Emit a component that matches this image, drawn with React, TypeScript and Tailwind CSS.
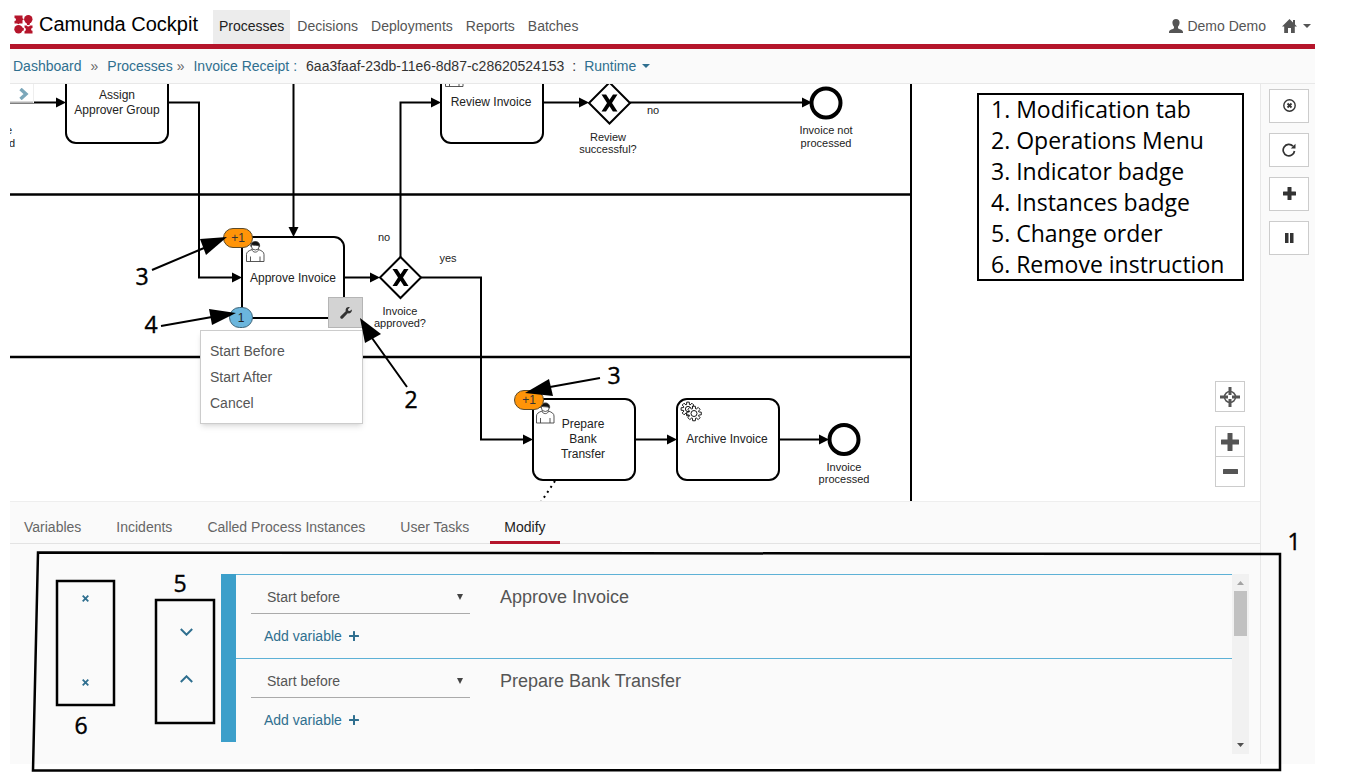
import React from "react";

const navItems = ["Decisions", "Deployments", "Reports", "Batches"];
const tabs = ["Variables", "Incidents", "Called Process Instances", "User Tasks", "Modify"];
const legend = [
  "1. Modification tab",
  "2. Operations Menu",
  "3. Indicator badge",
  "4. Instances badge",
  "5. Change order",
  "6. Remove instruction",
];
const instructions = [
  { name: "Approve Invoice", move: "down" },
  { name: "Prepare Bank Transfer", move: "up" },
];

function Logo() {
  return (
    <svg width="19" height="19" viewBox="0 0 19 19" fill="#b5152b" aria-hidden="true">
      <path d="M.5.5H8.500V3.300L10 4.300 8.500 5.300V8.500H5.500L4.300 9.300 3.200 8.500H.5V6A1.500 1.500 0 0 0 .5 3Z" />
      <circle cx="14.300" cy="4.300" r="4.200" />
      <path d="M12.500 7.500h3.600l-.6 2.500h-2.400Z" />
      <circle cx="4.500" cy="14.300" r="4.200" />
      <path d="M7.500 12.500v3.600l2.300-.6v-2.400Z" />
      <path d="M10.500 10.500H12.600A1.900 1.900 0 0 0 16 10.500H18.500V13A1.400 1.400 0 0 0 18.500 15.800V18.500H10.500V16.300A2 2 0 0 0 10.500 12.500Z" />
    </svg>
  );
}

function Caret() {
  return (
    <svg width="8" height="4" viewBox="0 0 8 4" fill="currentColor" aria-hidden="true">
      <path d="M0 0h8L4 4Z" />
    </svg>
  );
}

function Plus({ size, thick }: { size: number; thick: number }) {
  const a = (size - thick) / 2;
  return (
    <svg width={size} height={size} fill="currentColor" aria-hidden="true">
      <rect x={a} y="0" width={thick} height={size} rx="0.5" />
      <rect x="0" y={a} width={size} height={thick} rx="0.5" />
    </svg>
  );
}

function Arrow({ points }: { points: string }) {
  return <polygon points={points} fill="#000" />;
}

function Gateway({ x, y }: { x: number; y: number }) {
  return (
    <g transform={`translate(${x} ${y})`}>
      <path d="M0-20.500 20.500 0 0 20.500-20.500 0Z" fill="#fff" stroke="#000" strokeWidth="2" />
      <path d="M-8-8.500h4.600L0-3.200l3.500-5.300h4.500L2.500 0l5.500 8.500H3.400L0 3.200l-3.500 5.300h-4.500l5.500-8.500Z" />
    </g>
  );
}

function UserMark({ x, y }: { x: number; y: number }) {
  return (
    <g transform={`translate(${x} ${y})`} stroke="#444" strokeWidth="0.9" fill="#fff">
      <path d="M.5 20.500v-7c0-2.500 2-3.600 5.500-5h6.500c3.500 1.400 5.500 2.500 5.500 5v7Z" />
      <path d="M4.500 20.500v-5M14 20.500v-5" fill="none" />
      <path d="M6 8.500c.5 3.500 6 3.500 6.500 0" />
      <circle cx="9.300" cy="5" r="4" />
      <path d="M5 5.500C4-1 14.500-1.500 13.600 5.500 12 3.500 8 5 5 3.500Z" fill="#111" />
    </g>
  );
}

function Gear({ x, y, r }: { x: number; y: number; r: number }) {
  const teeth = Array.from({ length: 8 }, (_, i) => {
    const c = (i * Math.PI) / 4;
    return [
      [-0.32, r],
      [-0.18, r + 2.4],
      [0.18, r + 2.4],
      [0.32, r],
    ]
      .map(([d, q]) => `${x + Math.cos(c + d) * q},${y + Math.sin(c + d) * q}`)
      .join(" ");
  }).join(" ");
  return (
    <g fill="#fff" stroke="#000" strokeWidth="0.9">
      <polygon points={teeth} />
      <circle cx={x} cy={y} r={r - 2} />
    </g>
  );
}

function Label({ x, y, lines, size = 12, step = 15 }: { x: number; y: number; lines: string[]; size?: number; step?: number }) {
  return (
    <text textAnchor="middle" fontSize={size} fill="#222">
      {lines.map((line, i) => (
        <tspan key={line} x={x} y={y + i * step}>
          {line}
        </tspan>
      ))}
    </text>
  );
}

function Diagram() {
  return (
    <svg className="absolute inset-0 h-full w-full" role="img" aria-label="Invoice process diagram">
      <g transform="translate(-10 -84)">
        <g stroke="#000" fill="none">
          <path d="M10 194.500H911M10 357H911" strokeWidth="2.500" />
          <path d="M911 84V502" strokeWidth="2" />
          <g strokeWidth="2">
            <path d="M10 102.500H58M168 102.500H199V277.500H234M293.500 84V228M345 277.500H372M400.500 257V102.500H432M543 102.500H580M630 102.500H803M421 277.500H481V439.500H525M635 439.500H669M780 439.500H820" />
            <path d="M555 481 541 502" strokeDasharray="2 4" />
            <g fill="#fff">
              <rect x="66" y="63" width="102" height="80" rx="10" />
              <rect x="441" y="63" width="102" height="80" rx="10" />
              <rect x="242" y="237" width="102" height="81" rx="10" />
              <rect x="533" y="399" width="102" height="81" rx="10" />
              <rect x="677" y="399" width="102" height="81" rx="10" />
            </g>
          </g>
          <g strokeWidth="4" fill="#fff">
            <circle cx="826" cy="103" r="14.500" />
            <circle cx="844" cy="439.500" r="14.500" />
          </g>
        </g>
        <Arrow points="56,97.500 66,102.500 56,107.500" />
        <Arrow points="232,272.500 242,277.500 232,282.500" />
        <Arrow points="288.500,227 293.500,237 298.500,227" />
        <Arrow points="370,272.500 380,277.500 370,282.500" />
        <Arrow points="431,97.500 441,102.500 431,107.500" />
        <Arrow points="579,97.500 589,102.500 579,107.500" />
        <Arrow points="802,97.500 812,102.500 802,107.500" />
        <Arrow points="523,434.500 533,439.500 523,444.500" />
        <Arrow points="667,434.500 677,439.500 667,444.500" />
        <Arrow points="819,434.500 829,439.500 819,444.500" />
        <Gateway x={609.5} y={103} />
        <Gateway x={400.5} y={277.5} />
        <UserMark x={246} y={241} />
        <UserMark x={536} y={402.5} />
        <UserMark x={445} y={66} />
        <Gear x={688} y={409} r={4.6} />
        <Gear x={694} y={413.5} r={5} />
        <Label x={117} y={99} lines={["Assign", "Approver Group"]} />
        <Label x={491} y={106} lines={["Review Invoice"]} />
        <Label x={293} y={282} lines={["Approve Invoice"]} />
        <Label x={583} y={428} lines={["Prepare", "Bank", "Transfer"]} />
        <Label x={727} y={443} lines={["Archive Invoice"]} />
        <Label x={608} y={141} lines={["Review", "successful?"]} size={11} step={12} />
        <Label x={826} y={134} lines={["Invoice not", "processed"]} size={11} step={13} />
        <Label x={844} y={471} lines={["Invoice", "processed"]} size={11} step={12} />
        <Label x={400} y={315} lines={["Invoice", "approved?"]} size={11} step={12} />
        <Label x={653} y={114} lines={["no"]} size={11} />
        <Label x={384} y={241} lines={["no"]} size={11} />
        <Label x={448} y={262} lines={["yes"]} size={11} />
        <Label x={9} y={134} lines={["e"]} size={11} />
        <Label x={12} y={147} lines={["d"]} size={11} />
      </g>
    </svg>
  );
}

function Annotations() {
  return (
    <svg className="pointer-events-none absolute inset-0 h-full w-full" aria-hidden="true">
      <g fill="none" stroke="#000" strokeWidth="2.500">
        <path d="M38 552.500 1280 554V770L33 770.500Z" />
        <rect x="57" y="581" width="57" height="124" />
        <rect x="156" y="600" width="58" height="123" />
        <path d="M152 270 204 248M161 326 212 317M407 387 372 338M600 378 550 387" strokeWidth="2" />
      </g>
      <Arrow points="227,237 200,239 206,255" />
      <Arrow points="236,313 209,309 212,325" />
      <Arrow points="360,318 381,334 365,343" />
      <Arrow points="525,393 549,379 553,396" />
      <g fontSize="23" stroke="#000" strokeWidth="0.4" textAnchor="middle" className="font-['Open_Sans',sans-serif]">
        <text x="142" y="285">3</text>
        <text x="151" y="333">4</text>
        <text x="411" y="408">2</text>
        <text x="614" y="384">3</text>
        <text x="1294" y="550">1</text>
        <text x="180" y="592">5</text>
        <text x="81" y="734">6</text>
      </g>
    </svg>
  );
}

const sideButton = "flex h-[34px] w-10 items-center justify-center border border-[#ccc] bg-white pb-px text-[#333]";
const zoomButton = "flex h-[31px] w-[30px] items-center justify-center border border-[#ccc] bg-white text-[#555]";

export default function App() {
  return (
    <div className="relative min-h-screen bg-white pt-2.5 pr-[31px] pb-[15px] pl-2.5 font-['Liberation_Sans',Arial,sans-serif] text-sm text-[#555]">
      <header className="flex h-[39px] items-stretch border-b-[5px] border-[#b5152b]">
        <a href="#home" className="flex w-[203px] items-center gap-1.5 pb-1.5 pl-1 text-xl text-black">
          <Logo />
          Camunda Cockpit
        </a>
        <nav className="flex flex-1 items-stretch gap-px">
          <a href="#processes" className="flex items-center bg-[#ececec] px-1.5 pb-0.5 text-[#222]">
            Processes
          </a>
          {navItems.map((item) => (
            <a key={item} href={`#${item}`} className="flex items-center px-1.5 pb-0.5">
              {item}
            </a>
          ))}
        </nav>
        <div className="flex items-center gap-4 pr-1 pb-0.5">
          <button className="flex items-center gap-1">
            <svg width="14" height="14" viewBox="0 0 14 14" fill="currentColor" aria-hidden="true">
              <path d="M7 0C9.200 0 10.700 1.600 10.600 3.800 10.500 5.800 9.600 7 9 7.800V9.200C9.700 10.200 14 10.500 14 13V14H0V13C0 10.500 4.300 10.200 5 9.200V7.800C4.400 7 3.500 5.800 3.400 3.800 3.300 1.600 4.800 0 7 0Z" />
            </svg>
            Demo Demo
          </button>
          <button className="flex items-center gap-1.5" aria-label="Applications">
            <svg width="15" height="14" viewBox="0 0 15 14" fill="currentColor" aria-hidden="true">
              <path d="M7.500 0 11 3.500V1H13V5.600L15 7.600H12.800V14H9V9H6V14H2.200V7.600H0Z" />
            </svg>
            <Caret />
          </button>
        </div>
      </header>

      <nav aria-label="Breadcrumb" className="flex h-[35px] items-center border-b border-[#e8e8e8] bg-[#fafafa] pl-[3px] text-[#333]">
        <a href="#dashboard" className="text-[#2f6f8f]">Dashboard</a>
        <span className="px-[9px] text-[#666]">»</span>
        <a href="#processes" className="text-[#2f6f8f]">Processes</a>
        <span className="pr-[9px] pl-1 text-[#666]">»</span>
        <a href="#invoice" className="text-[#2f6f8f]">Invoice Receipt</a>
        <span className="pr-[9px] pl-1 text-[#2f6f8f]">:</span>
        <span>6aa3faaf-23db-11e6-8d87-c28620524153</span>
        <span className="px-2">:</span>
        <button className="flex items-center gap-1.5 text-[#2f6f8f]">
          Runtime
          <Caret />
        </button>
      </nav>

      <div className="flex">
        <main className="flex min-w-0 flex-1 flex-col">
          <section className="relative h-[417px] overflow-hidden bg-white">
            <Diagram />
            <button aria-label="Expand sidebar" className="absolute top-0 left-0 flex h-[19px] w-6 items-center justify-center border-r border-[#eee] bg-white/70 pl-1">
              <svg width="10" height="12" viewBox="0 0 10 12" fill="none" stroke="#7ba7ba" strokeWidth="3.400" aria-hidden="true">
                <path d="M1.500 1 7 6 1.500 11" />
              </svg>
            </button>
            <span className="absolute top-[144px] left-[213px] flex h-5 w-[30px] items-center justify-center rounded-full border border-[#5b4a2a] bg-[#ff9408] text-xs text-[#333]">+1</span>
            <span className="absolute top-[306px] left-[504px] flex h-5 w-[30px] items-center justify-center rounded-full border border-[#5b4a2a] bg-[#ff9408] text-xs text-[#333]">+1</span>
            <span className="absolute top-[223px] left-[219px] flex h-[21px] w-6 items-center justify-center rounded-full border border-[#3d6478] bg-[#6bb6dd] text-xs text-[#222]">1</span>
            <button aria-label="Operations" className="absolute top-[213px] left-[318px] flex h-[31px] w-[35px] items-center justify-center border border-[#b5b5b5] bg-[#d3d3d3] text-[#333]">
              <svg width="12" height="12" viewBox="0 0 14 14" fill="currentColor" aria-hidden="true">
                <path d="M13.700 2.800 11.500 4.700 9.600 4.300 9.300 2.500 11.500.4C9.500-.4 7.300.6 6.700 2.700 6.500 3.500 6.600 4.200 6.700 4.900L.7 10.800C-.8 12.500 1.500 14.900 3.200 13.300L9 7.400C11.800 8.200 14.500 5.700 13.700 2.800Z" />
              </svg>
            </button>
            <ul className="absolute top-[246px] left-[190px] w-[163px] border border-[#ccc] bg-white py-[7px] shadow-md">
              {["Start Before", "Start After", "Cancel"].map((item) => (
                <li key={item}>
                  <button className="h-[26px] w-full px-[9px] text-left">{item}</button>
                </li>
              ))}
            </ul>
            <ol className="absolute top-[9px] left-[967px] flex h-[188px] w-[267px] flex-col justify-center border-2 border-black bg-white pl-3 font-['Open_Sans',sans-serif] text-[23px] leading-[31px] text-black">
              {legend.map((item) => (
                <li key={item} className="whitespace-nowrap">{item}</li>
              ))}
            </ol>
            <div className="absolute right-[15px] bottom-3.5 flex flex-col">
              <button aria-label="Reset view" className={`${zoomButton} mb-3.5`}>
                <svg width="20" height="20" viewBox="0 0 20 20" fill="none" stroke="currentColor" aria-hidden="true">
                  <circle cx="10" cy="10" r="5.500" strokeWidth="1.500" />
                  <path d="M10 0V8M10 12V20M0 10H8M12 10H20" strokeWidth="3" />
                </svg>
              </button>
              <button aria-label="Zoom in" className={zoomButton}>
                <Plus size={18} thick={5} />
              </button>
              <button aria-label="Zoom out" className={`${zoomButton} -mt-px`}>
                <svg width="15" height="5" fill="currentColor" aria-hidden="true">
                  <rect width="15" height="5" rx="0.500" />
                </svg>
              </button>
            </div>
          </section>

          <section className="border-t border-[#eee] bg-[#fafafa]">
            <div role="tablist" className="flex h-[42px] items-stretch gap-[7px] border-b border-[#e3e3e3]">
              {tabs.map((tab) => (
                <button
                  key={tab}
                  role="tab"
                  aria-selected={tab === "Modify"}
                  className={
                    tab === "Modify"
                      ? "-mb-px border-b-[3px] border-[#b5152b] px-[14px] pt-3 pb-0.5 text-[#222]"
                      : "px-[14px] pt-2.5 pb-0.5 text-[#666]"
                  }
                >
                  {tab}
                </button>
              ))}
            </div>
            <div className="flex pt-[30px] pr-[11px] pb-2.5">
              <ul className="min-w-0 flex-1">
                {instructions.map((row, i) => (
                  <li key={row.name} className="flex h-[84px]">
                    <div className="flex w-[151px] justify-center pt-5">
                      <button aria-label={`Remove ${row.name}`} className="h-2 text-[#2f6f8f]">
                        <svg width="7" height="7" viewBox="0 0 7 7" stroke="currentColor" strokeWidth="1.800" aria-hidden="true">
                          <path d="M.7.7 6.300 6.300M6.300.7.7 6.300" />
                        </svg>
                      </button>
                    </div>
                    <div className={row.move === "down" ? "flex w-[60px] items-end pb-[22px] pl-[19px]" : "flex w-[60px] items-start pt-[17px] pl-[19px]"}>
                      <button aria-label={`Move ${row.name} ${row.move}`} className="text-[#2f6f8f]">
                        <svg width="13" height="8" viewBox="0 0 13 8" fill="none" stroke="currentColor" strokeWidth="2" aria-hidden="true">
                          <path d={row.move === "down" ? "M.8 1 6.500 6.700 12.200 1" : "M.8 7 6.500 1.300 12.200 7"} />
                        </svg>
                      </button>
                    </div>
                    <div className="w-[15px] bg-[#3c9fca]" />
                    <div className="flex flex-1 border-t border-[#5db1d6] pl-[15px]">
                      <div className="flex w-[219px] flex-col">
                        <div className="relative border-b border-[#aaa] pt-1.5">
                          <select
                            aria-label={`Instruction for ${row.name}`}
                            id={`instruction-${i}`}
                            className="h-8 w-full appearance-none bg-transparent pl-4 text-sm"
                          >
                            <option>Start before</option>
                            <option>Start after</option>
                            <option>Cancel</option>
                          </select>
                          <svg className="pointer-events-none absolute top-[19px] right-[7px]" width="6" height="6" viewBox="0 0 6 6" fill="#444" aria-hidden="true">
                            <path d="M0 0h6L3 6Z" />
                          </svg>
                        </div>
                        <button className="mt-3 ml-[13px] flex items-center gap-[7px] text-left text-[#2f6f8f]">
                          Add variable
                          <Plus size={10} thick={2} />
                        </button>
                      </div>
                      <h2 className="pt-2.5 pl-[30px] text-lg leading-6">{row.name}</h2>
                    </div>
                  </li>
                ))}
              </ul>
              <div className="flex h-[180px] w-[17px] flex-col items-center bg-[#f1f1f1] pt-[7px] pb-[7px]" aria-hidden="true">
                <svg width="7" height="4" fill="#a3a3a3">
                  <path d="M0 4h7L3.500 0Z" />
                </svg>
                <div className="mt-1.5 h-[45px] w-[13px] bg-[#c1c1c1]" />
                <svg className="mt-auto" width="7" height="4" fill="#505050">
                  <path d="M0 0h7L3.500 4Z" />
                </svg>
              </div>
            </div>
          </section>
        </main>

        <aside className="flex w-[55px] flex-col gap-2.5 border-l border-[#e8e8e8] bg-[#fafafa] pt-[5px] pl-2">
          <button aria-label="Cancel instance" className={sideButton}>
            <svg width="13" height="13" viewBox="0 0 13 13" fill="none" stroke="currentColor" aria-hidden="true">
              <circle cx="6.500" cy="6.500" r="5.700" strokeWidth="1.400" />
              <path d="M4.500 4.500 8.500 8.500M8.500 4.500 4.500 8.500" strokeWidth="1.800" />
            </svg>
          </button>
          <button aria-label="Retry" className={sideButton}>
            <svg width="14" height="14" viewBox="0 0 14 14" fill="none" stroke="currentColor" strokeWidth="1.700" aria-hidden="true">
              <path d="M11 3.200A5.700 5.700 0 1 0 12.500 8" />
              <path d="M13.500.8V5.500H8.800Z" fill="currentColor" stroke="none" />
            </svg>
          </button>
          <button aria-label="Add variable" className={sideButton}>
            <Plus size={13} thick={4} />
          </button>
          <button aria-label="Suspend" className={sideButton}>
            <svg width="9" height="10" fill="currentColor" aria-hidden="true">
              <rect width="3.500" height="10" />
              <rect x="5" width="3.500" height="10" />
            </svg>
          </button>
        </aside>
      </div>
      <Annotations />
    </div>
  );
}
